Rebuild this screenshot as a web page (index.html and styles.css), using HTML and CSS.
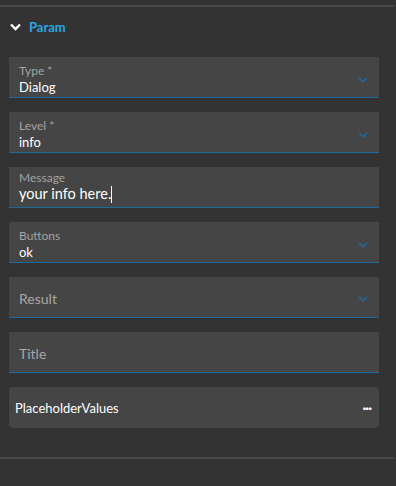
FILE: index.html
```html
<!DOCTYPE html>
<html lang="en">
<head>
  <meta charset="UTF-8" />
  <title>Param</title>
  <link rel="stylesheet" href="styles.css">
</head>
<body>
<div class="panel">
  <div class="section-header">
    <svg class="toggle" width="11" height="8" viewBox="0 0 11 8"><path d="M1 1.5 L5.5 6 L10 1.5" fill="none" stroke="#fff" stroke-width="2.4"/></svg>
    <span class="section-title">Param</span>
  </div>

  <div class="fields">
    <div class="field select">
      <div class="field-body">
        <span class="label">Type *</span>
        <span class="value">Dialog</span>
      </div>
      <svg class="caret" width="10" height="6" viewBox="0 0 10 6"><path d="M1 1 L5 4.6 L9 1" fill="none" stroke="#1d6aa0" stroke-width="1.6"/></svg>
    </div>
    <div class="field select">
      <div class="field-body">
        <span class="label">Level *</span>
        <span class="value">info</span>
      </div>
      <svg class="caret" width="10" height="6" viewBox="0 0 10 6"><path d="M1 1 L5 4.6 L9 1" fill="none" stroke="#1d6aa0" stroke-width="1.6"/></svg>
    </div>
    <div class="field text">
      <div class="field-body">
        <span class="label">Message</span>
        <span class="value big">your info here.<span class="cursor"></span></span>
      </div>
    </div>
    <div class="field select">
      <div class="field-body">
        <span class="label">Buttons</span>
        <span class="value">ok</span>
      </div>
      <svg class="caret" width="10" height="6" viewBox="0 0 10 6"><path d="M1 1 L5 4.6 L9 1" fill="none" stroke="#1d6aa0" stroke-width="1.6"/></svg>
    </div>
    <div class="field select empty">
      <div class="field-body">
        <span class="placeholder">Result</span>
      </div>
      <svg class="caret" width="10" height="6" viewBox="0 0 10 6"><path d="M1 1 L5 4.6 L9 1" fill="none" stroke="#1d6aa0" stroke-width="1.6"/></svg>
    </div>
    <div class="field empty">
      <div class="field-body">
        <span class="placeholder">Title</span>
      </div>
    </div>
    <div class="field card">
      <span class="card-title">PlaceholderValues</span>
      <span class="more">&middot;&middot;&middot;</span>
    </div>
  </div>
</div>
</body>
</html>
```
FILE: styles.css
```css
* { box-sizing: border-box; }
body {
  margin: 0;
  background: #333333;
  font-family: Lato, 'Open Sans', sans-serif;
  color: #ffffff;
  height: 486px;
  overflow: hidden;
}

.panel {
  margin-top: 5px;
  width: 394px;
  border-top: 2px solid #4a4a4a;
  border-bottom: 2px solid #4a4a4a;
  padding-bottom: 29px;
}

.section-header {
  display: flex;
  align-items: center;
  gap: 8px;
  height: 40px;
  padding-left: 10px;
}
.toggle { display: block; }
.section-title {
  color: #2aa6e4;
  font-size: 13px;
  font-weight: 700;
}

.fields {
  display: flex;
  flex-direction: column;
  gap: 14px;
  padding: 10px 15px 0 9px;
}

.field {
  display: flex;
  align-items: flex-start;
  height: 41px;
  background: #454545;
  border-bottom: 1px solid #1d6aa0;
  padding: 5px 10px 0;
}
.field.text { padding-top: 2px; }
.field-body {
  flex: 1;
  display: flex;
  flex-direction: column;
}
.label {
  font-size: 12px;
  color: #a3a3a3;
  line-height: 17px;
}
.value {
  font-size: 13px;
  line-height: 16px;
}
.value.big { font-size: 14.5px; line-height: 16px; }
.cursor {
  display: inline-block;
  width: 1px;
  height: 17px;
  background: #fff;
  vertical-align: -4px;
}
.field.empty { align-items: center; padding-top: 0; }
.placeholder {
  font-size: 14px;
  color: #a8a8a8;
  padding-top: 2px;
}
.caret { display: block; margin-top: 15px; margin-right: 1px; }
.field.empty .caret { margin-top: 4px; }

.card {
  align-items: center;
  border-bottom: none;
  border-radius: 4px;
  padding: 0 8px 0 6px;
  justify-content: space-between;
}
.card-title { font-size: 13px; }
.more {
  font-size: 14px;
  font-weight: 700;
  letter-spacing: -1px;
}
```
